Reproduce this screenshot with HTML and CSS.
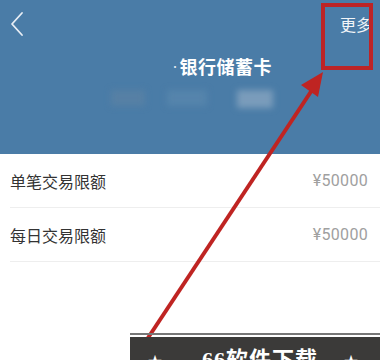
FILE: index.html
```html
<!DOCTYPE html>
<html lang="zh">
<head>
<meta charset="utf-8">
<link rel="stylesheet" href="styles.css">
</head>
<body>
<div class="page">
  <header class="header">
    <div class="topbar">
      <svg class="back" width="14" height="26" viewBox="0 0 14 26"><path d="M12 2 L2 13 L12 24" fill="none" stroke="#e8eef5" stroke-width="1.8" stroke-linecap="round" stroke-linejoin="round"/></svg>
      <span class="more">更多</span>
    </div>
    <div class="title"><span class="dot">·</span>银行储蓄卡</div>
    <div class="cardno">
      <span class="blur b1"></span>
      <span class="blur b2"></span>
      <span class="blur b3"></span>
    </div>
  </header>
  <ul class="list">
    <li class="row"><span class="label">单笔交易限额</span><span class="value">¥50000</span></li>
    <li class="row"><span class="label">每日交易限额</span><span class="value">¥50000</span></li>
  </ul>
  <div class="highlight"></div>
  <svg class="arrow" width="380" height="360" viewBox="0 0 380 360">
    <line x1="140" y1="350" x2="314" y2="87" stroke="#bf2422" stroke-width="4"/>
    <polygon points="323,72 318,97 301,85" fill="#bf2422"/>
  </svg>
  <div class="banner">
    <div class="banner-line"></div>
    <div class="banner-body"><span class="star">★</span><span class="btext">66软件下载</span><span class="star">★</span></div>
  </div>
</div>
</body>
</html>
```
FILE: styles.css
```css
* { box-sizing: border-box; }
html, body { margin: 0; padding: 0; }
body { background: #fff; font-family: "Noto Sans CJK SC", "Noto Sans", sans-serif; }
.page { position: relative; width: 380px; height: 360px; overflow: hidden; background: #fff; }
.header { height: 154px; background: #4a7ca7; display: flex; flex-direction: column; }
.topbar { height: 46px; display: flex; justify-content: space-between; align-items: flex-start; padding: 11px 8px 0 10px; }
.back { display: block; margin-top: 0; }
.more { color: #f2f5f8; font-size: 16px; line-height: 22px; margin-top: 2px; }
.title { display: flex; justify-content: center; padding-left: 64px; color: #ffffff; font-size: 18px; font-weight: 700; line-height: 24px; margin-top: 8px; letter-spacing: 0.5px; }
.dot { font-family: "Liberation Sans", sans-serif; font-weight: 400; margin-right: 1px; color: #dfe7ef; }
.cardno { display: flex; justify-content: center; margin-top: 12px; height: 20px; padding-left: 4px; }
.blur { display: block; height: 16px; filter: blur(3px); }
.b1 { width: 34px; background: #5680a5; margin-right: 22px; }
.b2 { width: 40px; background: #5584ac; margin-right: 30px; }
.b3 { width: 36px; background: #7a9cbb; height: 18px; }
.list { list-style: none; margin: 0; padding: 0 0 0 10px; }
.row { display: flex; justify-content: space-between; align-items: center; height: 54px; border-bottom: 1px solid #eeeeee; padding-right: 12px; }
.label { color: #333; font-size: 16px; }
.value { color: #a0a0a0; font-size: 16px; font-family: "Roboto", "Noto Sans", sans-serif; letter-spacing: 0.3px; }
.highlight { position: absolute; left: 321px; top: 3px; width: 52px; height: 67px; border: 4px solid #bd2426; }
.arrow { position: absolute; left: 0; top: 0; }
.banner { position: absolute; left: 130px; top: 333px; width: 250px; }
.banner-line { height: 2px; background: #777; margin-bottom: 2px; }
.banner-body { height: 30px; background: #3b3a39; color: #fff; display: flex; align-items: flex-start; padding-top: 11px; }
.star { font-size: 14px; line-height: 18px; margin-top: 3px; }
.star:first-child { margin-left: 18px; margin-right: 40px; }
.star:last-child { margin-left: 26px; }
.btext { font-family: "Liberation Serif", "Noto Sans CJK SC", serif; font-weight: 700; font-size: 22px; line-height: 24px; letter-spacing: 1px; }
```
